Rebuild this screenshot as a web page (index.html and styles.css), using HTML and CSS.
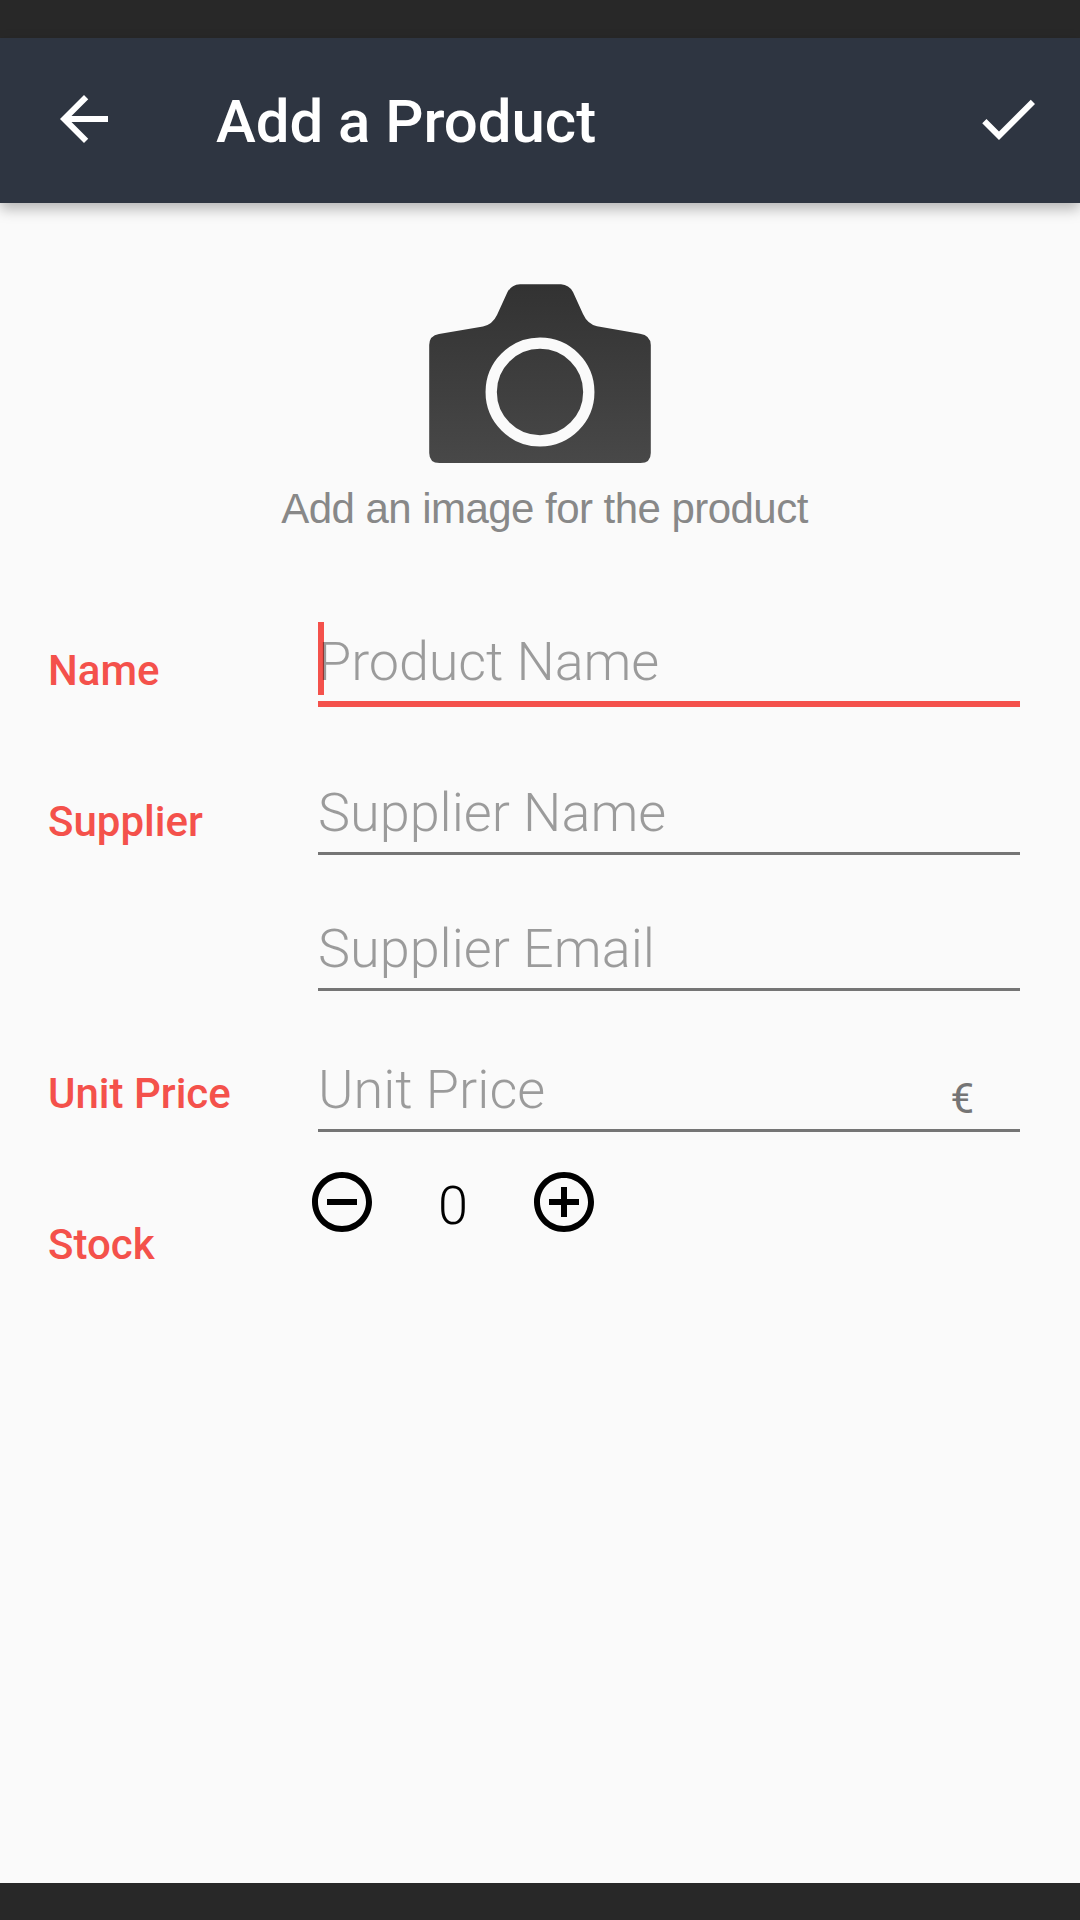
FILE: index.html
```html
<!DOCTYPE html>
<html lang="en">
<head>
<meta charset="utf-8">
<title>Add a Product</title>
<link rel="stylesheet" href="styles.css">
</head>
<body>
<div class="screen">
  <div class="status-bar"></div>
  <header class="app-bar">
    <svg class="icon" viewBox="0 0 24 24"><path d="M20 11H7.83l5.59-5.59L12 4l-8 8 8 8 1.41-1.41L7.83 13H20v-2z"/></svg>
    <h1 class="title">Add a Product</h1>
    <svg class="icon" viewBox="0 0 24 24"><path d="M9 16.17L4.83 12l-1.42 1.41L9 19 21 7l-1.41-1.41z"/></svg>
  </header>
  <main class="content">
    <div class="picker">
      <svg class="camera" viewBox="0 0 222 180">
        <defs>
          <linearGradient id="body" x1="0" y1="0" x2="0" y2="1">
            <stop offset="0" stop-color="#323232"/>
            <stop offset="1" stop-color="#484848"/>
          </linearGradient>
        </defs>
        <path fill="url(#body)" d="M91 .3H132Q140 .8 144 8L154 30Q158.500 40 168 42.300L211 49.800Q221.600 51.500 221.800 61V169Q221.800 179 211.500 179H10.500Q.2 179 .2 169V61Q.4 51.500 10 50L54 42.500Q63.500 40.500 68 31L78.500 8Q82.500 .8 91 .3Z"/>
        <circle cx="111" cy="108" r="48.800" fill="none" stroke="#fafafa" stroke-width="11.300"/>
      </svg>
      <p class="caption">Add an image for the product</p>
    </div>
    <div class="row">
      <span class="label">Name</span>
      <div class="field focused"><span class="hint">Product Name</span></div>
    </div>
    <div class="row supplier">
      <span class="label">Supplier</span>
      <div class="field"><span class="hint">Supplier Name</span></div>
    </div>
    <div class="row email">
      <div class="field"><span class="hint">Supplier Email</span></div>
    </div>
    <div class="row price">
      <span class="label">Unit Price</span>
      <div class="field"><span class="hint">Unit Price</span><span class="unit">€</span></div>
    </div>
    <div class="row stock">
      <span class="label">Stock</span>
      <div class="stepper">
        <svg class="icon" viewBox="0 0 24 24"><path d="M7 11v2h10v-2H7zm5-9C6.480 2 2 6.480 2 12s4.480 10 10 10 10-4.480 10-10S17.520 2 12 2zm0 18c-4.410 0-8-3.590-8-8s3.590-8 8-8 8 3.590 8 8-3.590 8-8 8z"/></svg>
        <span class="count">0</span>
        <svg class="icon" viewBox="0 0 24 24"><path d="M13 7h-2v4H7v2h4v4h2v-4h4v-2h-4V7zm-1-5C6.480 2 2 6.480 2 12s4.480 10 10 10 10-4.480 10-10S17.520 2 12 2zm0 18c-4.410 0-8-3.590-8-8s3.590-8 8-8 8 3.590 8 8-3.590 8-8 8z"/></svg>
      </div>
    </div>
  </main>
  <div class="nav-bar"></div>
</div>
</body>
</html>
```
FILE: styles.css
```css
* { box-sizing: border-box; }

body {
  margin: 0;
  font-family: Roboto, sans-serif;
}

.screen {
  display: flex;
  flex-direction: column;
  width: 1080px;
  height: 1920px;
  overflow: hidden;
  background: #fafafa;
}

.status-bar { height: 38px; background: #282828; }
.nav-bar { height: 37px; background: #282828; }

.app-bar {
  display: flex;
  align-items: center;
  height: 165px;
  padding: 0 36px 0 48px;
  background: #2e3541;
  color: #fff;
  box-shadow: 0 6px 13px rgba(0, 0, 0, .28);
}

.icon {
  display: block;
  flex: none;
  width: 72px;
  height: 72px;
  fill: currentColor;
}

.app-bar .icon { margin-bottom: 3px; }

.title {
  flex: 1;
  margin: 0;
  padding: 2px 0 0 96px;
  font-size: 60px;
  font-weight: 500;
  line-height: 71px;
  letter-spacing: -.06px;
}

.content {
  flex: 1;
  padding: 81px 60px 0 48px;
}

.picker {
  display: flex;
  flex-direction: column;
  align-items: center;
  width: 984px;
  height: 338px;
}

.camera { width: 222px; height: 180px; }

.caption {
  margin: 21px 0 0 9px;
  font-family: "Liberation Sans", Arial, sans-serif;
  font-size: 42px;
  line-height: 48px;
  letter-spacing: -.54px;
  color: #888;
  white-space: nowrap;
}

.row {
  display: grid;
  grid-template-columns: 270px 702px;
  align-items: start;
}

.label {
  padding-top: 24px;
  font-size: 42px;
  font-weight: 500;
  line-height: 49px;
  color: #f4514b;
}

.field {
  position: relative;
  grid-column: 2;
  display: flex;
  justify-content: space-between;
  border-bottom: 3px solid #757575;
  line-height: 79px;
}

.hint {
  position: relative;
  font-size: 54px;
  font-weight: 300;
  color: rgba(0, 0, 0, .38);
}

.focused { border-bottom: 6px solid #f4514b; }
.focused .hint { letter-spacing: -.1px; }

/* Text caret, beneath the hint */
.focused::before {
  content: "";
  position: absolute;
  left: 0;
  top: 0;
  width: 6px;
  height: 73px;
  background: #f4514b;
}

.supplier { margin-top: 66px; }
.email { margin-top: 54px; }
.price { margin-top: 59px; }
.price .label { padding-top: 19px; }

.unit {
  height: 79px;
  padding: 24px 46px 0 0;
  font-size: 42px;
  line-height: 49px;
  color: #757575;
}

.stock { margin-top: 34px; }
.stock .label { padding-top: 54px; }

.stepper {
  display: flex;
  align-items: center;
  margin-left: -12px;
  color: #000;
}

.count {
  width: 150px;
  padding-top: 8px;
  text-align: center;
  font-size: 54px;
  font-weight: 300;
  line-height: 64px;
}
```
